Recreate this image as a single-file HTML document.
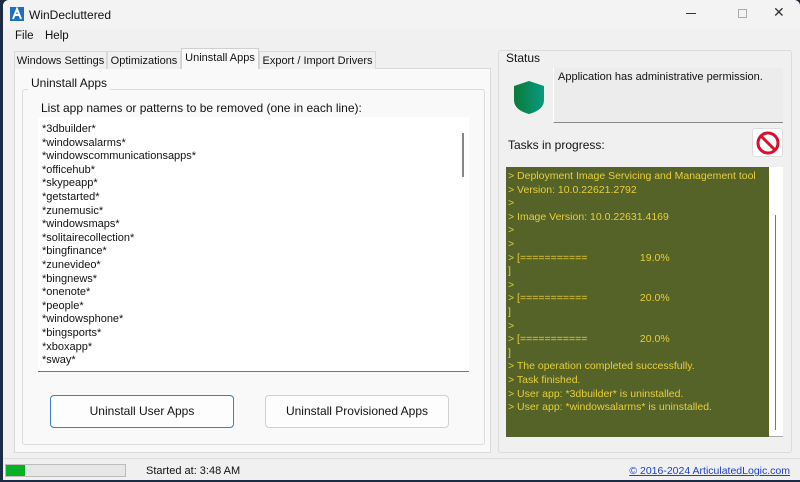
<!DOCTYPE html>
<html><head><style>
*{margin:0;padding:0;box-sizing:border-box}
body{width:800px;height:482px;overflow:hidden;background:#1c2a44;font-family:"Liberation Sans",sans-serif;font-size:11.5px;color:#111;position:relative}
.win{position:absolute;left:3px;top:0;width:797px;height:480px;background:#f0f0f0;border-radius:6px 6px 0 0}
.a{position:absolute;white-space:nowrap}
.tab{position:absolute;top:51px;height:18px;border:1px solid #d9d9d9;border-bottom:none;background:#f0f0f0;padding:3px 0 0;font-size:11px;white-space:nowrap;overflow:hidden;text-align:center}
.btn{position:absolute;height:33px;background:#fdfdfd;border:1px solid #d0d0d0;border-radius:4px;text-align:center;line-height:31px;font-size:12px}
.con div{height:13.6px}
</style></head><body>
<div class="win">
<div class="a" style="left:0;top:0;width:797px;height:29px;background:#f3f3f3;border-radius:6px 6px 0 0"></div>
<svg class="a" style="left:7px;top:7px" width="14" height="14"><rect width="14" height="14" fill="#1e6fc0"/><path d="M3 12 L7 2 L11 12 M5 8 L9 8" stroke="#fff" stroke-width="2" fill="none"/></svg>
<div class="a" style="left:26px;top:8px;font-size:12px">WinDecluttered</div>
<div class="a" style="left:683px;top:13px;width:10px;height:1px;background:#333"></div>
<div class="a" style="left:735px;top:9px;width:9px;height:9px;border:1px solid #aaa"></div>
<div class="a" style="left:770px;top:4px;font-size:14px;color:#333">✕</div>
<div class="a" style="left:12px;top:30px">File</div>
<div class="a" style="left:42px;top:30px">Help</div>
<div class="a" style="left:11px;top:68px;width:477px;height:385px;background:#f9f9f9;border:1px solid #dadada"></div>
<div class="tab" style="left:11px;width:93px">Windows Settings</div>
<div class="tab" style="left:104px;width:74px">Optimizations</div>
<div class="tab" style="left:178px;top:48px;height:21px;width:78px;background:#f9f9f9;border-color:#d0d0d0">Uninstall Apps</div>
<div class="tab" style="left:256px;width:117px">Export / Import Drivers</div>
<div class="a" style="left:19px;top:89px;width:463px;height:356px;border:1px solid #dcdcdc;border-radius:3px"></div>
<div class="a" style="left:25px;top:76px;background:#f9f9f9;padding:0 3px;font-size:12px">Uninstall Apps</div>
<div class="a" style="left:38px;top:101px;font-size:12px">List app names or patterns to be removed (one in each line):</div>
<div class="a" style="left:35px;top:117px;width:431px;height:255px;background:#fff;border-bottom:1px solid #777"></div>
<div class="a" style="left:459px;top:133px;width:2px;height:44px;background:#888"></div>
<div class="a con" style="left:39px;top:123px;line-height:13.6px;font-size:11px">
<div>*3dbuilder*</div><div>*windowsalarms*</div><div>*windowscommunicationsapps*</div><div>*officehub*</div><div>*skypeapp*</div><div>*getstarted*</div><div>*zunemusic*</div><div>*windowsmaps*</div><div>*solitairecollection*</div><div>*bingfinance*</div><div>*zunevideo*</div><div>*bingnews*</div><div>*onenote*</div><div>*people*</div><div>*windowsphone*</div><div>*bingsports*</div><div>*xboxapp*</div><div>*sway*</div></div>
<div class="btn" style="left:47px;top:395px;width:184px;border:1px solid #3c7fc4">Uninstall User Apps</div>
<div class="btn" style="left:262px;top:395px;width:184px">Uninstall Provisioned Apps</div>
<div class="a" style="left:495px;top:50px;width:294px;height:403px;border:1px solid #dcdcdc;border-radius:3px;background:#f0f0f0"></div>
<div class="a" style="left:503px;top:51px;font-size:12px">Status</div>
<svg class="a" style="left:510px;top:80px" width="32" height="35"><defs><linearGradient id="g"><stop offset="0" stop-color="#0a7a3a"/><stop offset="1" stop-color="#0a9a80"/></linearGradient></defs><path d="M1 6 L16 1 L31 6 L31 20 Q31 30 16 34 Q1 30 1 20Z" fill="url(#g)"/></svg>
<div class="a" style="left:550px;top:68px;width:230px;height:55px;background:#ececec;border-bottom:1px solid #888;border-left:1px solid #fff"></div>
<div class="a" style="left:555px;top:71px;font-size:11px">Application has administrative permission.</div>
<div class="a" style="left:505px;top:138px;font-size:12px">Tasks in progress:</div>
<div class="a" style="left:749px;top:128px;width:31px;height:29px;background:#fff;border:1px solid #ddd;border-radius:3px"></div>
<svg class="a" style="left:753px;top:131px" width="24" height="24"><circle cx="12" cy="12" r="10" fill="none" stroke="#d8102a" stroke-width="3"/><path d="M5 5 L19 19" stroke="#d8102a" stroke-width="3"/></svg>
<div class="a" style="left:503px;top:167px;width:277px;height:270px;background:#fff;border-bottom:1px solid #aaa"></div>
<div class="a" style="left:503px;top:167px;width:263px;height:270px;background:#556228"></div>
<div class="a" style="left:772px;top:215px;width:1px;height:215px;background:#777"></div>
<div class="a con" style="left:505px;top:170px;line-height:13.6px;font-size:10.5px;color:#e8cf3a">
<div>&gt; Deployment Image Servicing and Management tool</div><div>&gt; Version: 10.0.22621.2792</div><div>&gt;</div><div>&gt; Image Version: 10.0.22631.4169</div><div>&gt;</div><div>&gt;</div><div>&gt; [===========&nbsp;&nbsp;&nbsp;&nbsp;&nbsp;&nbsp;&nbsp;&nbsp;&nbsp;&nbsp;&nbsp;&nbsp;&nbsp;&nbsp;&nbsp;&nbsp;&nbsp;&nbsp;19.0%</div><div>]</div><div>&gt;</div><div>&gt; [===========&nbsp;&nbsp;&nbsp;&nbsp;&nbsp;&nbsp;&nbsp;&nbsp;&nbsp;&nbsp;&nbsp;&nbsp;&nbsp;&nbsp;&nbsp;&nbsp;&nbsp;&nbsp;20.0%</div><div>]</div><div>&gt;</div><div>&gt; [===========&nbsp;&nbsp;&nbsp;&nbsp;&nbsp;&nbsp;&nbsp;&nbsp;&nbsp;&nbsp;&nbsp;&nbsp;&nbsp;&nbsp;&nbsp;&nbsp;&nbsp;&nbsp;20.0%</div><div>]</div><div>&gt; The operation completed successfully.</div><div>&gt; Task finished.</div><div>&gt; User app: *3dbuilder* is uninstalled.</div><div>&gt; User app: *windowsalarms* is uninstalled.</div></div>
<div class="a" style="left:0;top:458px;width:797px;height:1px;background:#ddd"></div>
<div class="a" style="left:2px;top:464px;width:121px;height:13px;background:#e6e6e6;border:1px solid #bcbcbc"></div>
<div class="a" style="left:3px;top:465px;width:19px;height:11px;background:#06b025"></div>
<div class="a" style="left:143px;top:465px;font-size:11px">Started at: 3:48 AM</div>
<div class="a" style="right:10px;top:465px;font-size:10.5px;color:#1a3fc8;text-decoration:underline">© 2016-2024 ArticulatedLogic.com</div>
</div>
</body></html>
